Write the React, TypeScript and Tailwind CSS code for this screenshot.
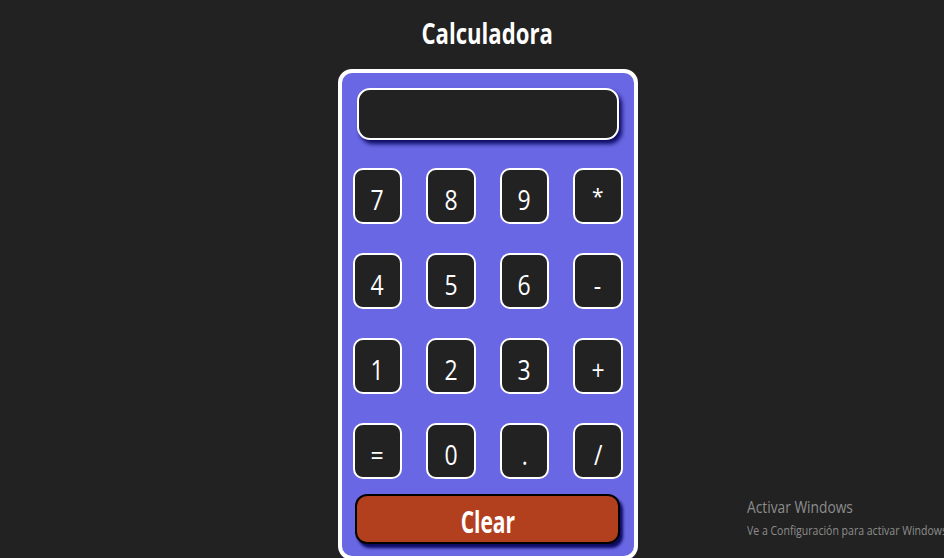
import React from "react";

const keys = ["7", "8", "9", "*", "4", "5", "6", "-", "1", "2", "3", "+", "=", "0", ".", "/"];

export default function App() {
  return (
    <div
      className="relative h-[558px] w-full overflow-hidden bg-[#222222] flex flex-col items-center pt-[14px] pl-[31px]"
      style={{ fontFamily: '"Open Sans", "Noto Sans", sans-serif' }}
    >
      <h1 className="h-[38px] text-[28px] leading-[38px] font-bold text-white">
        <span className="inline-block scale-x-[0.79] origin-center">Calculadora</span>
      </h1>

      <div className="mt-[17px] w-[300px] rounded-[14px] border-4 border-white bg-[#6967e3] flex flex-col items-center pt-[15px] pb-[12px]">
        <div className="ml-[1px] h-[52px] w-[262px] rounded-[13px] border-2 border-white bg-[#222222] shadow-[3px_4px_4px_#0d0b63]" />

        <div className="mt-[28px] grid grid-cols-[repeat(4,49.5px)] gap-x-[24px] gap-y-[29px]">
          {keys.map((k) => (
            <button
              key={k}
              className="flex h-[56px] w-[49.5px] items-center justify-center rounded-[10px] border-2 border-white bg-[#222222] pt-[5px] text-[28px] font-normal text-white"
            >
              <span className={k === "*" ? "inline-block scale-[0.75] -translate-y-[3px]" : "inline-block scale-x-[0.82]"}>{k}</span>
            </button>
          ))}
        </div>

        <button className="mt-[15px] flex h-[50px] w-[265px] items-center justify-center rounded-[12px] border-2 border-black bg-[#b2401f] pt-[5px] text-[30px] font-bold text-white shadow-[3px_4px_3px_#0d0b63]">
          <span className="inline-block scale-x-[0.7]">Clear</span>
        </button>
      </div>

      <div className="absolute left-[747px] top-[496px] whitespace-nowrap text-[#8d8d8d]">
        <div className="origin-left scale-x-[0.82] text-[16.8px] leading-[22px]">Activar Windows</div>
        <div className="origin-left scale-x-[0.9] text-[11.7px] leading-[16px] mt-[4px]">
          Ve a Configuración para activar Windows.
        </div>
      </div>
    </div>
  );
}
